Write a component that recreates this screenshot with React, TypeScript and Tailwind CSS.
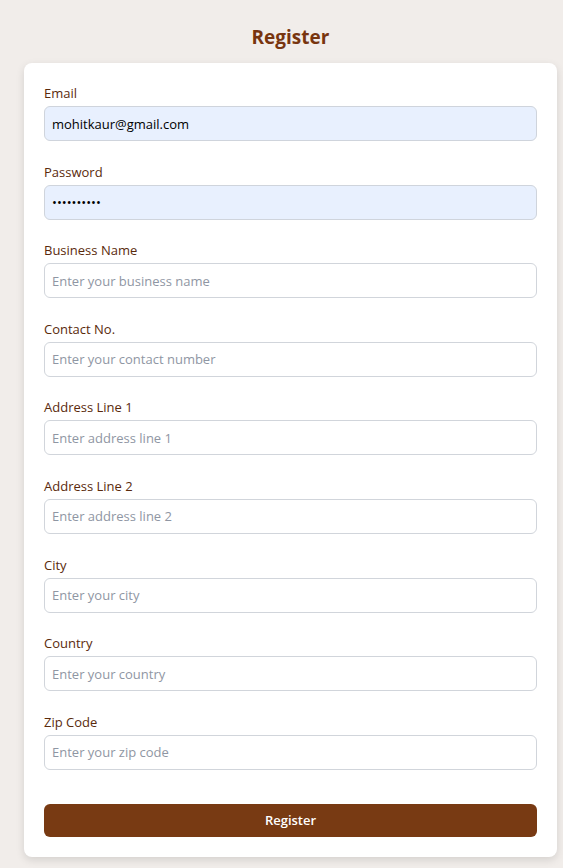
import { useState } from "react";

const fields = [
  { id: "email", label: "Email", type: "email", placeholder: "Enter your email", value: "mohitkaur@gmail.com" },
  { id: "password", label: "Password", type: "password", placeholder: "Enter your password", value: "mohit12345" },
  { id: "businessName", label: "Business Name", type: "text", placeholder: "Enter your business name", value: "" },
  { id: "contact", label: "Contact No.", type: "text", placeholder: "Enter your contact number", value: "" },
  { id: "address1", label: "Address Line 1", type: "text", placeholder: "Enter address line 1", value: "" },
  { id: "address2", label: "Address Line 2", type: "text", placeholder: "Enter address line 2", value: "" },
  { id: "city", label: "City", type: "text", placeholder: "Enter your city", value: "" },
  { id: "country", label: "Country", type: "text", placeholder: "Enter your country", value: "" },
  { id: "zip", label: "Zip Code", type: "text", placeholder: "Enter your zip code", value: "" },
];

const App = () => {
  const [form, setForm] = useState<any>(
    fields.reduce((acc, f) => ({ ...acc, [f.id]: f.value }), {})
  );

  return (
    <div className="h-[868px] w-full overflow-hidden bg-[#f1edea] pl-6 pr-[6px] pt-[23px] font-['Open_Sans','Noto_Sans',sans-serif]">
      <h1 className="text-center text-[19px] leading-[28px] font-bold text-[#78350f]">
        Register
      </h1>
      <form
        className="mt-[12px] rounded-lg bg-white px-5 pt-[20px] pb-5 shadow-[0_3px_8px_rgba(0,0,0,0.12)]"
        onSubmit={(e) => e.preventDefault()}
      >
        <div className="flex flex-col gap-[20.6px]">
          {fields.map((f) => {
            const filled = form[f.id] !== "";
            return (
              <div key={f.id} className="flex flex-col">
                <label
                  htmlFor={f.id}
                  className="mb-[3px] text-[13px] leading-[20px] text-[#5a2a0c]"
                >
                  {f.label}
                </label>
                <input
                  id={f.id}
                  type={f.type}
                  placeholder={f.placeholder}
                  value={form[f.id]}
                  onChange={(e) => setForm({ ...form, [f.id]: e.target.value })}
                  className={
                    filled
                      ? "h-[35px] w-full rounded-md border border-[#cfd4dc] bg-[#e8f0fe] px-[7px] text-[13px] text-black outline-none"
                      : "h-[35px] w-full rounded-md border border-[#d1d5db] bg-white px-[7px] text-[13px] text-black outline-none placeholder:text-[#8f96a3]"
                  }
                />
              </div>
            );
          })}
        </div>
        <button
          type="submit"
          className="mt-[34px] h-[33px] w-full rounded-md bg-[#783a13] text-[13px] font-semibold text-white"
        >
          Register
        </button>
      </form>
    </div>
  );
};

export default App;
